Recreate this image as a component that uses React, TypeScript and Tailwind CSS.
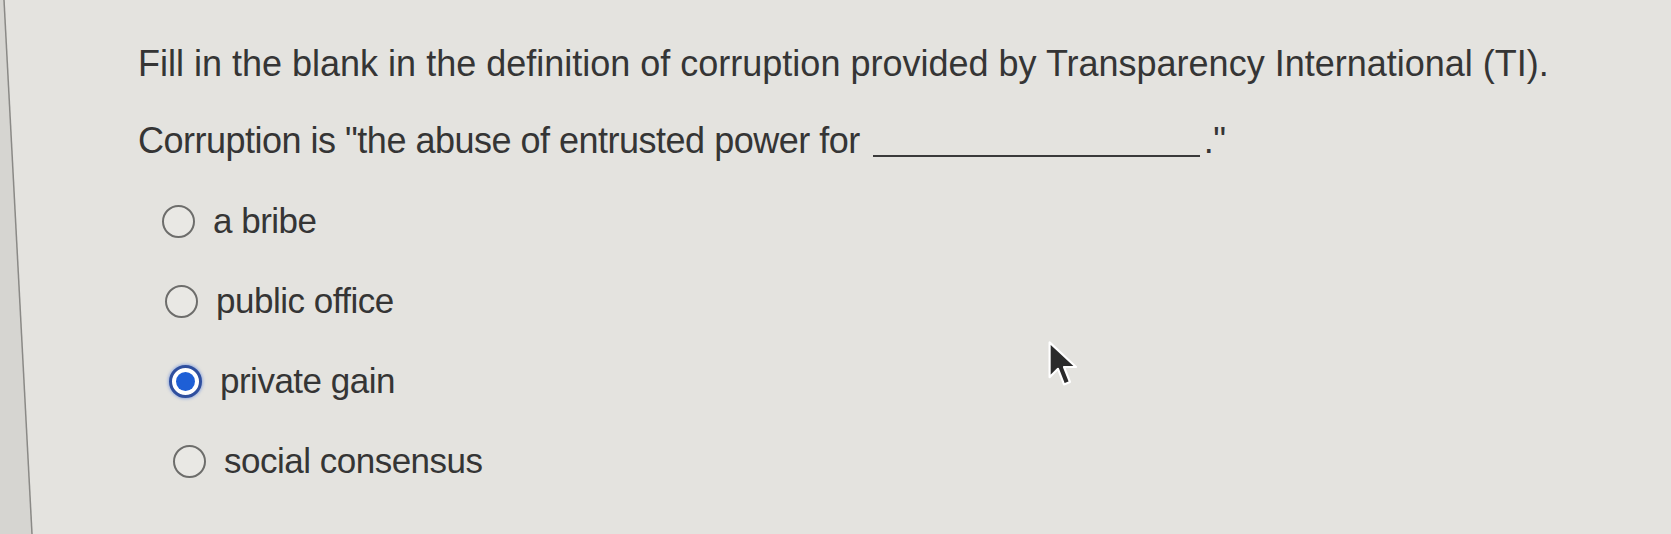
import type { ReactNode } from "react";

interface Opzione {
  testo: string;
  scelta?: boolean;
  rientro: string;
}

const opzioni: Opzione[] = [
  { testo: "a bribe", rientro: "pl-[162px]" },
  { testo: "public office", rientro: "pl-[165px]" },
  { testo: "private gain", scelta: true, rientro: "pl-[169px]" },
  { testo: "social consensus", rientro: "pl-[173px]" },
];

function Radio({ scelta }: { scelta?: boolean }) {
  if (scelta) {
    return (
      <span className="flex h-[33px] w-[33px] shrink-0 items-center justify-center rounded-full border-[3px] border-[#2f4f9e] bg-white shadow-[0_0_3px_1px_rgba(90,130,220,0.55)]">
        <span className="h-[19px] w-[19px] rounded-full bg-[#1e5fd6]" />
      </span>
    );
  }
  return <span className="h-[33px] w-[33px] shrink-0 rounded-full border-2 border-[#6d6d6b] bg-[#e9e8e4]" />;
}

function Riga({ children, stretta }: { children: ReactNode; stretta?: boolean }) {
  return (
    <p className={`text-[36px] leading-[40px] ${stretta ? "tracking-[-0.5px]" : "tracking-[0px]"}`}>{children}</p>
  );
}

export default function App() {
  return (
    <div className="relative h-[534px] w-[1671px] overflow-hidden bg-[#e4e3df] font-['Liberation_Sans',Arial,sans-serif] text-[#353535]">
      <div className="pl-[138px] pt-[44px]">
        <Riga>Fill in the blank in the definition of corruption provided by Transparency International (TI).</Riga>
        <div className="mt-[37px]">
          <Riga stretta>
            Corruption is "the abuse of entrusted power for
            <span className="ml-[13px] mr-[4px] inline-block w-[327px] translate-y-[4px] border-b-2 border-[#3a3a3a]" />
            ."
          </Riga>
        </div>
      </div>

      <div className="mt-[40px] flex flex-col gap-[40px]">
        {opzioni.map((o) => (
          <div key={o.testo} className={`flex h-[40px] items-center gap-[18px] ${o.rientro}`}>
            <Radio scelta={o.scelta} />
            <span className="text-[35px] leading-[40px] tracking-[-0.5px]">{o.testo}</span>
          </div>
        ))}
      </div>

      {/* bordo dello schermo nella foto */}
      <svg className="pointer-events-none absolute left-0 top-0" width="60" height="534" viewBox="0 0 60 534">
        <polygon points="0,0 4,0 32,534 0,534" fill="#d6d5d1" />
        <line x1="4" y1="0" x2="32" y2="534" stroke="#8a8986" strokeWidth="1.5" />
      </svg>

      {/* puntatore del mouse */}
      <svg className="pointer-events-none absolute left-[1046px] top-[340px]" width="36" height="48" viewBox="0 0 30 40">
        <path
          d="M3 2 L3 31 L10 24 L15 37 L20 35 L15 22.5 L25 22.5 Z"
          fill="#2b2b2b"
          stroke="#ffffff"
          strokeWidth="1.8"
          strokeLinejoin="round"
        />
      </svg>
    </div>
  );
}
